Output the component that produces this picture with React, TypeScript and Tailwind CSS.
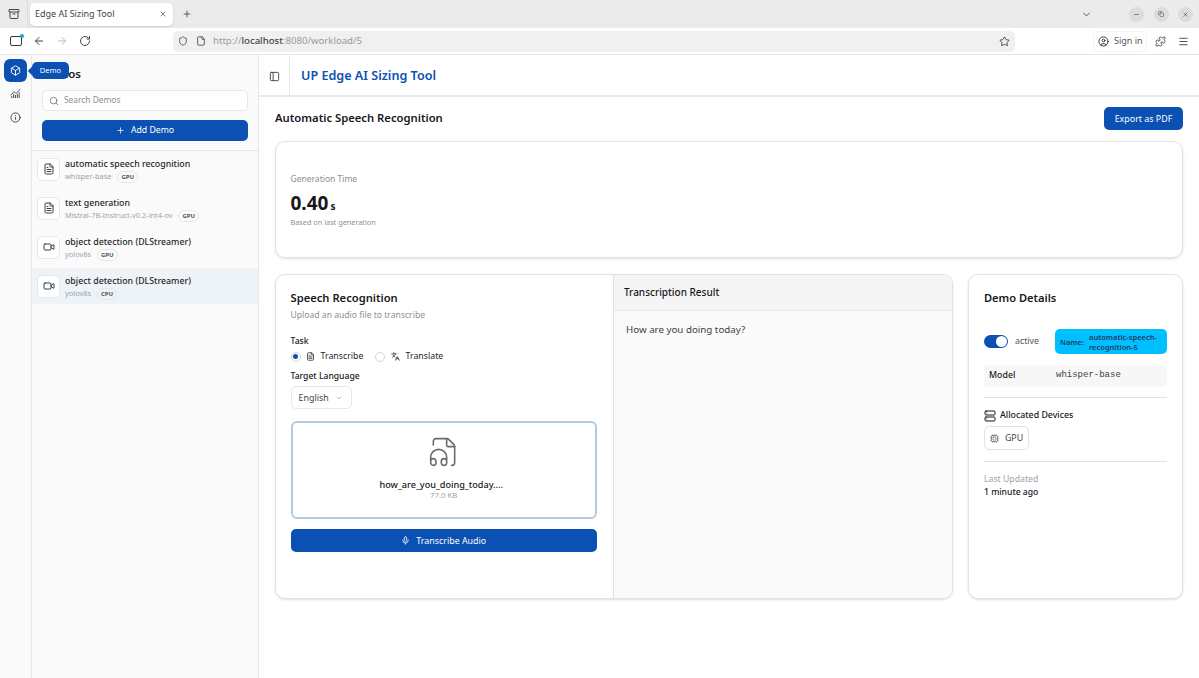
import React from "react";
import { ArrowLeft, ArrowRight, RotateCw, Shield, File, Star, CircleUser, Menu, ChevronDown, Minus, X, Plus, Box, ChartNoAxesCombined, Info, Search, FileText, Video, PanelLeft, Languages, FileHeadphone, Mic, Server, Cpu, Archive, Puzzle, Copy } from "lucide-react";

const Item = ({ icon, title, sub, badge, active }: { icon: React.ReactNode; title: string; sub: string; badge: string; active?: boolean }) => (
  <div className={`h-[36px] flex items-center gap-[5px] pl-[5px] ${active ? "bg-[#eef3f8]" : ""}`}>
    <div className="w-[23px] h-[23px] rounded-[5px] border border-[#e5e7eb] bg-white flex items-center justify-center text-[#3f3f46] shrink-0">{icon}</div>
    <div className="min-w-0 mt-[2px]">
      <div className="text-[8.8px] leading-[12px] text-[#27272a] font-medium">{title}</div>
      <div className="flex items-center gap-[6px] h-[12px] mt-px">
        <span className="text-[7.4px] text-[#9ca3af]">{sub}</span>
        <span className="text-[6px] font-bold leading-[8px] text-[#52525b] border border-[#e5e7eb] rounded-full px-[3px] py-px">{badge}</span>
      </div>
    </div>
  </div>
);

export default function App() {
  return (
    <div className="w-[1199px] h-[678px] overflow-hidden bg-white flex flex-col text-[#18181b] font-['Noto_Sans',sans-serif]">
      {/* Tab bar */}
      <div className="h-[28px] bg-[#ebebeb] flex items-center shrink-0">
        <div className="w-[28px] h-full flex items-center justify-center border-r border-[#dcdcdc] text-[#444]"><Archive size={12} /></div>
        <div className="ml-[2px] w-[143px] h-[23px] bg-white rounded-[5px] shadow-sm flex items-center pl-[5px] pr-[6px] text-[9px] text-[#444]">
          <span className="flex-1">Edge AI Sizing Tool</span>
          <X size={8} />
        </div>
        <Plus size={10} className="ml-[9px] text-[#444]" />
        <div className="flex-1" />
        <ChevronDown size={11} className="text-[#444]" />
        <div className="ml-[37px] flex items-center gap-[9.5px] mr-[6px] text-[#444]">
          <span className="w-[15px] h-[15px] rounded-full bg-[#dcdcdc] flex items-center justify-center"><Minus size={7} /></span>
          <span className="w-[15px] h-[15px] rounded-full bg-[#dcdcdc] flex items-center justify-center"><Copy size={6} /></span>
          <span className="w-[15px] h-[15px] rounded-full bg-[#dcdcdc] flex items-center justify-center"><X size={7} /></span>
        </div>
      </div>
      {/* Toolbar */}
      <div className="h-[27px] bg-white border-b border-[#e5e5e5] flex items-center shrink-0 text-[#444]">
        <div className="relative ml-[10px] w-[12px] h-[10px] border-[1.5px] border-[#333] rounded-[2px] shrink-0">
          <span className="absolute -top-[3px] -right-[3px] w-[4px] h-[4px] rounded-full bg-[#1fa5e0]" />
        </div>
        <ArrowLeft size={12} className="ml-[11px] shrink-0" />
        <ArrowRight size={12} className="ml-[11px] text-[#bbb] shrink-0" />
        <RotateCw size={12} className="ml-[11px] shrink-0" />
        <div className="ml-[82px] w-[842px] h-[21px] rounded-[5px] bg-[#f0f0f0] flex items-center pr-[5px] shrink-0">
          <Shield size={10} className="ml-[5px]" />
          <File size={10} className="ml-[8px]" />
          <span className="ml-[7px] text-[9.6px] text-[#9a9a9a] flex-1">http://<span className="text-[#444] font-medium">localhost</span>:8080/workload/5</span>
          <Star size={11} />
        </div>
        <div className="ml-[78px] h-[21px] w-[54px] flex items-center gap-[5px] pl-[4px] shrink-0 text-[9px] text-[#555] border border-[#f4f4f4] rounded-[4px]">
          <CircleUser size={11} className="text-[#333]" />
          <span>Sign in</span>
        </div>
        <Puzzle size={11} className="ml-[7.5px] shrink-0" />
        <Menu size={11} className="ml-[12px] shrink-0" />
      </div>
      <div className="flex flex-1 min-h-0">
        {/* Rail */}
        <div className="relative w-[32px] border-r border-[#e5e7eb] bg-[#fafafa] flex flex-col items-center pt-[4px] shrink-0 text-[#3f3f46]">
          <div className="w-[23px] h-[23px] rounded-[6px] bg-[#0b50b3] flex items-center justify-center text-white"><Box size={11} /></div>
          <div className="mt-[6px]"><ChartNoAxesCombined size={11} /></div>
          <div className="mt-[13px]"><Info size={11} /></div>
          <div className="absolute left-[32px] top-[7px] w-[37px] h-[17px] rounded-[5px] bg-[#0b50b3] text-white text-[7.5px] flex items-center justify-center z-10">Demo</div>
          <div className="absolute left-[29px] top-[12.5px] w-[6px] h-[6px] rotate-45 bg-[#0b50b3] z-10" />
        </div>
        {/* Sidebar */}
        <div className="w-[227px] border-r border-[#e5e7eb] bg-[#fafafa] shrink-0 flex flex-col">
          <div className="h-[96px] border-b border-[#e5e7eb] px-[10px] shrink-0">
            <div className="h-[35px] pt-[10px] text-[11.5px] font-semibold">Demos</div>
            <div className="h-[21px] rounded-[5px] border border-[#e5e7eb] bg-white flex items-center pl-[6px] gap-[5px]">
              <Search size={10} className="text-[#71717a]" />
              <span className="text-[8.4px] text-[#8a8f98]">Search Demos</span>
            </div>
            <div className="mt-[9px] h-[21px] rounded-[5px] bg-[#0b50b3] text-white flex items-center justify-center gap-[6px] text-[8.7px]">
              <Plus size={9} /> Add Demo
            </div>
          </div>
          <div className="flex flex-col gap-[3px]">
            <Item icon={<FileText size={12} />} title="automatic speech recognition" sub="whisper-base" badge="GPU" />
            <Item icon={<FileText size={12} />} title="text generation" sub="Mistral-7B-Instruct-v0.2-int4-ov" badge="GPU" />
            <Item icon={<Video size={12} />} title="object detection (DLStreamer)" sub="yolov8s" badge="GPU" />
            <Item icon={<Video size={12} />} title="object detection (DLStreamer)" sub="yolov8s" badge="CPU" active />
          </div>
        </div>
        {/* Main */}
        <div className="flex-1 min-w-0 flex flex-col">
          <div className="h-[42px] border-b-2 border-[#e8e8e8] flex items-stretch shrink-0">
            <div className="w-[31px] pt-[2px] border-r border-[#e5e7eb] flex items-center justify-center text-[#3f3f46]"><PanelLeft size={11} /></div>
            <div className="pl-[11px] pt-[2px] flex items-center text-[12.6px] font-semibold text-[#0b50b3]">UP Edge AI Sizing Tool</div>
          </div>
          <div className="px-[16px] pt-[10px]">
            <div className="flex items-center justify-between h-[23px]">
              <div className="text-[11.25px] font-semibold">Automatic Speech Recognition</div>
              <div className="w-[79px] h-[23px] rounded-[5px] bg-[#0b50b3] text-white text-[8.9px] flex items-center justify-center">Export as PDF</div>
            </div>
            <div className="mt-[11px] h-[117px] rounded-[10px] border border-[#e2e2e2] shadow-sm px-[14.5px] flex flex-col justify-center">
              <div className="text-[8.5px] text-[#8a8f98] leading-[13px]">Generation Time</div>
              <div className="mt-[5.5px] leading-[24px]"><span className="text-[19px] font-bold">0.40</span><span className="ml-[2px] text-[10px] font-bold">s</span></div>
              <div className="-mt-px text-[7.3px] text-[#8a8f98] leading-[10px]">Based on last generation</div>
            </div>
            <div className="mt-[16px] flex gap-[15px]">
              {/* Speech card */}
              <div className="w-[678px] h-[325px] rounded-[10px] border border-[#e2e2e2] shadow-sm flex overflow-hidden shrink-0">
                <div className="w-[337px] pl-[14.5px] pr-[16px] pt-[15px] shrink-0">
                  <div className="text-[11.2px] font-semibold leading-[16px]">Speech Recognition</div>
                  <div className="text-[8.6px] text-[#8a8f98] leading-[14px] mt-[2px]">Upload an audio file to transcribe</div>
                  <div className="text-[8.6px] font-medium mt-[13px] leading-[13px]">Task</div>
                  <div className="mt-[1px] h-[15px] flex items-center text-[8.8px] text-[#27272a]">
                    <span className="w-[10px] h-[10px] rounded-full border border-[#d4d4d8] flex items-center justify-center"><span className="w-[5px] h-[5px] rounded-full bg-[#0b50b3]" /></span>
                    <FileText size={9} className="ml-[5.5px]" />
                    <span className="ml-[5.5px]">Transcribe</span>
                    <span className="ml-[11px] w-[10px] h-[10px] rounded-full border border-[#d4d4d8]" />
                    <Languages size={9} className="ml-[6px]" />
                    <span className="ml-[6px]">Translate</span>
                  </div>
                  <div className="text-[8.6px] font-medium mt-[6px] leading-[13px]">Target Language</div>
                  <div className="mt-[3px] w-[61px] h-[23px] rounded-[5px] border border-[#e5e7eb] flex items-center pl-[7px] gap-[6px] text-[8.9px] text-[#3f3f46]">English <ChevronDown size={8} className="text-[#9ca3af]" /></div>
                  <div className="mt-[12px] h-[98px] rounded-[6px] border-2 border-[#b4c8e0] flex flex-col items-center pt-[13px]">
                    <FileHeadphone size={32} strokeWidth={1.2} className="text-[#6b6b70]" />
                    <div className="mt-[10px] mr-[5px] text-[9.1px] font-medium leading-[13px]">how_are_you_doing_today....</div>
                    <div className="text-[7.8px] text-[#9ca3af] leading-[9px]">77.0 KB</div>
                  </div>
                  <div className="mt-[10px] h-[23px] rounded-[5px] bg-[#0b50b3] text-white flex items-center justify-center gap-[6px] text-[8.9px]"><Mic size={9} /> Transcribe Audio</div>
                </div>
                <div className="flex-1 border-l border-[#e2e2e2] bg-[#fafafa]">
                  <div className="h-[36px] border-b border-[#e5e7eb] pl-[10px] flex items-center text-[10px] font-medium bg-[#f5f5f5]">Transcription Result</div>
                  <div className="pl-[12px] pt-[12px] text-[9.75px] text-[#3f3f46]">How are you doing today?</div>
                </div>
              </div>
              {/* Details card */}
              <div className="w-[215px] h-[325px] rounded-[10px] border border-[#e2e2e2] shadow-sm px-[15px] pt-[15px] shrink-0">
                <div className="text-[11.1px] font-semibold leading-[16px]">Demo Details</div>
                <div className="mt-[23px] flex items-center">
                  <span className="w-[24px] h-[13px] rounded-full bg-[#0b50b3] flex items-center justify-end pr-[1px]"><span className="w-[11px] h-[11px] rounded-full bg-white" /></span>
                  <span className="ml-[7px] text-[8.8px] text-[#52525b] w-[24px]">active</span>
                  <div className="ml-[16px] w-[112px] h-[25px] rounded-[5px] bg-[#00bfff] flex items-center pl-[5px] gap-[5px] text-[7.5px] font-semibold text-[#1e3a5f] leading-[10px]">
                    <span>Name:</span><span>automatic-speech-<br />recognition-5</span>
                  </div>
                </div>
                <div className="mt-[11px] h-[22px] rounded-[4px] bg-[#f7f7f7] flex items-center pl-[5px] text-[8.8px] font-medium">
                  <span className="w-[67px]">Model</span>
                  <span className="font-['Liberation_Mono',monospace] text-[9px] font-normal text-[#3f3f46]">whisper-base</span>
                </div>
                <div className="mt-[10px] border-t border-[#e2e2e2]" />
                <div className="mt-[11px] flex items-center gap-[4px] text-[8.8px] font-medium"><Server size={12} /> Allocated Devices</div>
                <div className="mt-[4px] w-[45px] h-[24px] rounded-[5px] border border-[#e2e2e2] flex items-center justify-center gap-[6px] text-[8.8px] text-[#3f3f46]"><Cpu size={9} className="text-[#71717a]" />GPU</div>
                <div className="mt-[11px] border-t border-[#e2e2e2]" />
                <div className="mt-[11px] text-[8.7px] text-[#9ca3af] leading-[13px]">Last Updated</div>
                <div className="text-[8.6px] font-medium leading-[13px]">1 minute ago</div>
              </div>
            </div>
          </div>
        </div>
      </div>
    </div>
  );
}
